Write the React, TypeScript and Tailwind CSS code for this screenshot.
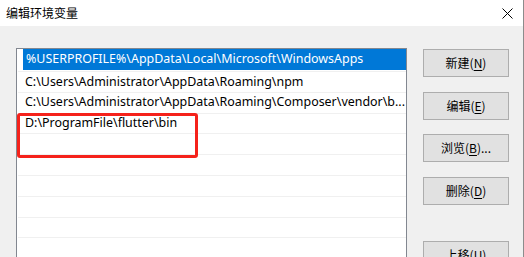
import React from "react";

const font = { fontFamily: '"Noto Sans", "Noto Sans CJK SC", sans-serif' };

function Btn({ label, k, suffix = "" }: { label: string; k: string; suffix?: string }) {
  return (
    <div className="w-[86px] h-[28px] border border-[#adadad] bg-[#e1e1e1] flex items-center justify-center text-[12px] text-black leading-none">
      <span>
        {label}(<span className="underline underline-offset-2">{k}</span>){suffix}
      </span>
    </div>
  );
}

export default function App() {
  const rows = [
    "C:\\Users\\Administrator\\AppData\\Roaming\\npm",
    "C:\\Users\\Administrator\\AppData\\Roaming\\Composer\\vendor\\b...",
    "D:\\ProgramFile\\flutter\\bin",
    "",
    "",
    "",
    "",
    "",
    "",
  ];
  return (
    <div className="w-[524px] h-[257px] overflow-hidden flex flex-col border-r border-[#8c8c8c] bg-[#f0f0f0]" style={font}>
      <div className="h-[26px] bg-white flex items-center justify-between pl-[6px] pr-[10px] shrink-0">
        <span className="text-[12px] text-black leading-none" style={{ fontFamily: '"Noto Sans CJK SC", sans-serif' }}>编辑环境变量</span>
        <svg width="11" height="11" viewBox="0 0 11 11">
          <path d="M0.5 0.5 L10.5 10.5 M10.5 0.5 L0.5 10.5" stroke="#000" strokeWidth="1" />
        </svg>
      </div>
      <div className="flex pt-[22px] pl-[16px]">
        <div className="relative w-[391px] h-[300px] border border-[#828790] bg-white shrink-0">
          <div>
            <div className="h-[23px] border-b border-[#f0f0f0] pl-[5px] ml-[1px]">
              <div className="h-[21px] bg-[#0078d7] text-white text-[12.45px] flex items-center pl-[3px] whitespace-nowrap overflow-hidden">
                %USERPROFILE%\AppData\Local\Microsoft\WindowsApps
              </div>
            </div>
            {rows.map((r, i) => (
              <div
                key={i}
                className="h-[20.8px] border-b border-[#f0f0f0] ml-[1px] pl-[7px] text-[12.45px] text-black flex items-center whitespace-nowrap"
              >
                <span>{r}</span>
              </div>
            ))}
          </div>
          <div className="absolute left-[0px] top-[64px] w-[181px] h-[45px] border-[3px] border-[#f5221b] rounded-[3px]" />
        </div>
        <div className="ml-[16px] pt-[1px] flex flex-col" style={{ fontFamily: '"Noto Sans CJK SC", sans-serif' }}>
          <Btn label="新建" k="N" />
          <div className="h-[15px]" />
          <Btn label="编辑" k="E" />
          <div className="h-[14px]" />
          <Btn label="浏览" k="B" suffix="..." />
          <div className="h-[15px]" />
          <Btn label="删除" k="D" />
          <div className="h-[36px]" />
          <Btn label="上移" k="U" />
        </div>
      </div>
    </div>
  );
}
